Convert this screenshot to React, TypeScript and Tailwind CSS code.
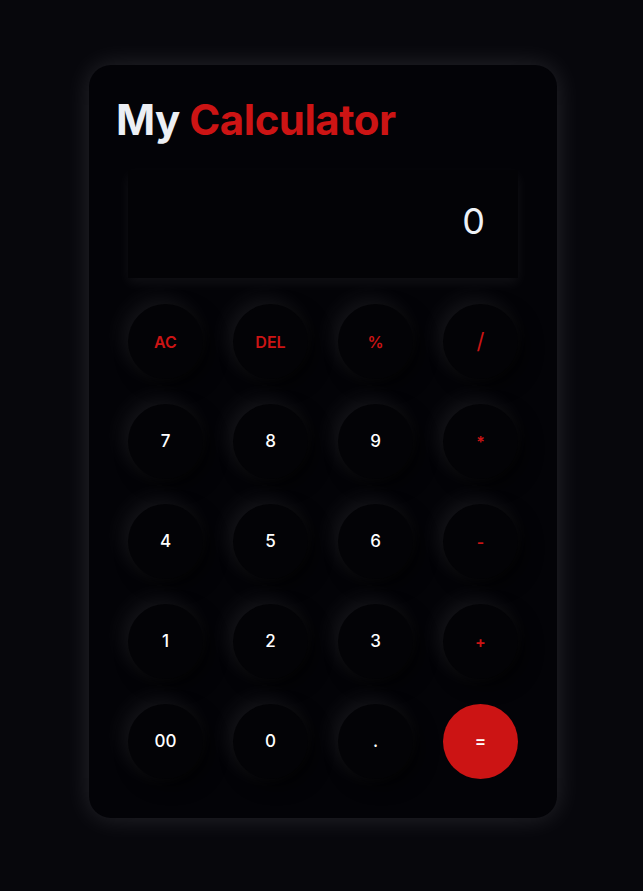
import React, { useState } from "react";

type Key = {
  label: string;
  kind: "num" | "op" | "eq";
  big?: boolean;
};

const keys: Key[] = [
  { label: "AC", kind: "op" },
  { label: "DEL", kind: "op" },
  { label: "%", kind: "op" },
  { label: "/", kind: "op", big: true },
  { label: "7", kind: "num" },
  { label: "8", kind: "num" },
  { label: "9", kind: "num" },
  { label: "*", kind: "op" },
  { label: "4", kind: "num" },
  { label: "5", kind: "num" },
  { label: "6", kind: "num" },
  { label: "-", kind: "op" },
  { label: "1", kind: "num" },
  { label: "2", kind: "num" },
  { label: "3", kind: "num" },
  { label: "+", kind: "op" },
  { label: "00", kind: "num" },
  { label: "0", kind: "num" },
  { label: ".", kind: "num" },
  { label: "=", kind: "eq" },
];

const KeyButton: React.FC<{ k: Key; onPress: (k: Key) => void }> = ({ k, onPress }) => {
  const base = "w-[75px] h-[75px] rounded-full flex items-center justify-center";
  const glow =
    "bg-[#030306] shadow-[-6px_-6px_22px_rgba(255,255,255,0.08),6px_6px_18px_rgba(0,0,0,0.8)]";
  let tone = "";
  if (k.kind === "eq") tone = "bg-[#cc1414] text-white text-[17px] font-semibold";
  else if (k.kind === "op")
    tone = k.big
      ? `${glow} text-[#cc1414] text-[22px] font-normal`
      : `${glow} text-[#cc1414] text-[16px] font-semibold`;
  else tone = `${glow} text-white text-[17px] font-medium`;
  return (
    <button className={`${base} ${tone}`} onClick={() => onPress(k)}>
      {k.label}
    </button>
  );
};

const App: React.FC = () => {
  const [value, setValue] = useState<string>("0");

  const press = (k: Key) => {
    if (k.label === "AC") return setValue("0");
    if (k.label === "DEL") return setValue((v) => (v.length > 1 ? v.slice(0, -1) : "0"));
    if (k.label === "=") {
      try {
        // eslint-disable-next-line no-new-func
        const r = Function(`return (${value})`)();
        setValue(String(r));
      } catch {
        setValue("Error");
      }
      return;
    }
    setValue((v) => (v === "0" ? k.label : v + k.label));
  };

  return (
    <div
      className="min-h-[891px] bg-[#07070c] flex justify-center pt-[65px] pl-[3px]"
      style={{ fontFamily: "Inter, 'Liberation Sans', sans-serif" }}
    >
      <div className="w-[468px] h-[753px] rounded-[22px] bg-[#030307] shadow-[0_0_26px_rgba(255,255,255,0.13)] px-[27px] pt-[30px]">
        <h1 className="text-[42px] font-bold leading-[50px] tracking-[-0.5px]">
          <span className="text-[#eceff4]">My </span>
          <span className="text-[#cc1414]">Calculator</span>
        </h1>

        <div className="px-[12px]">
          <div className="mt-[25px] h-[108px] bg-[#030306] shadow-[0_5px_12px_rgba(255,255,255,0.06)] flex items-center justify-end pr-[33px] pb-[6px]">
            <span className="text-[36px] text-[#eef2f7]">{value}</span>
          </div>

          <div className="mt-[26px] grid grid-cols-4 gap-x-[30px] gap-y-[25px]">
            {keys.map((k) => (
              <KeyButton key={k.label} k={k} onPress={press} />
            ))}
          </div>
        </div>
      </div>
    </div>
  );
};

export default App;
